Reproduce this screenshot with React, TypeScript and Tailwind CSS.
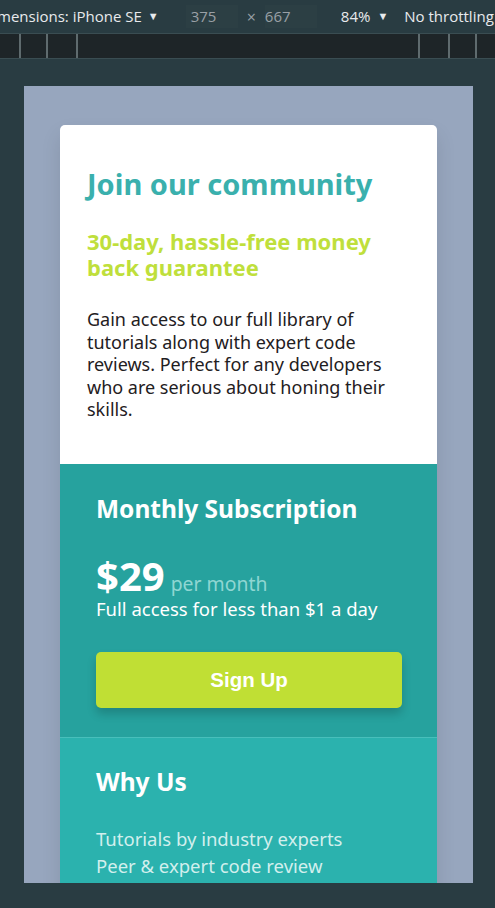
import React from "react";

export default function App() {
  const font = { fontFamily: '"Noto Sans", "Open Sans", sans-serif' };
  return (
    <div className="w-[495px] h-[908px] bg-[#293c42] overflow-hidden flex flex-col" style={font}>
      {/* toolbar */}
      <div className="h-[33px] flex items-center text-[15px] text-[#e8eaed] bg-[#293c42] whitespace-nowrap" style={{ fontFamily: '"Open Sans", sans-serif' }}>
        <span className="ml-[-3px]">mensions: iPhone SE</span>
        <span className="ml-[6px] text-[11px]">▼</span>
        <span className="ml-[27px] pl-[5px] text-[#9aa0a6] bg-[#2c3f44] w-[52px]">375</span>
        <span className="ml-[9px] text-[#9aa0a6] text-[16px]">×</span>
        <span className="ml-[9px] text-[#9aa0a6] w-[52px] bg-[#2c3f44]">667</span>
        <span className="ml-[24px]">84%</span>
        <span className="ml-[7px] text-[11px]">▼</span>
        <span className="ml-[16px]">No throttling</span>
      </div>
      {/* ruler */}
      <div className="h-[26px] bg-[#1e2528] border-y border-[#3a4d52] flex">
        <div className="ml-[19px] w-[2px] h-full bg-[#5f6b6e]" />
        <div className="ml-[25px] w-[2px] h-full bg-[#5f6b6e]" />
        <div className="ml-[28px] w-[2px] h-full bg-[#5f6b6e]" />
        <div className="ml-[340px] w-[2px] h-full bg-[#5f6b6e]" />
        <div className="ml-[28px] w-[2px] h-full bg-[#5f6b6e]" />
        <div className="ml-[25px] w-[2px] h-full bg-[#5f6b6e]" />
      </div>
      {/* viewport */}
      <div className="mt-[27px] ml-[24px] w-[449px] h-[797px] bg-[#97a6be] overflow-hidden pt-[39px] pl-[36px]">
        <div className="w-[377px] rounded-t-[5px] overflow-hidden shadow-[0_10px_20px_rgba(0,0,0,0.1)]">
          <div className="bg-white px-[27px] pt-[40px] h-[339px]">
            <h1 className="text-[29px] leading-[38px] font-bold text-[#3ab0ad]">Join our community</h1>
            <h2 className="mt-[25px] text-[22px] leading-[26px] font-bold text-[#bfdf3c]">30-day, hassle-free money back guarantee</h2>
            <p className="mt-[28px] text-[18px] leading-[22.6px] text-[#1f2022]">
              Gain access to our full library of tutorials along with expert code reviews. Perfect for any developers who are serious about honing their skills.
            </p>
          </div>
          <div className="bg-[#26a29e] px-[36px] pt-[28px] h-[273px] text-white">
            <h3 className="text-[24.5px] leading-[34px] font-bold">Monthly Subscription</h3>
            <div className="mt-[29px] flex items-baseline">
              <span className="text-[40px] leading-[42px] font-bold">$29</span>
              <span className="ml-[6px] text-[19.4px] text-[#8fd6d2]">per month</span>
            </div>
            <p className="text-[18.5px] leading-[22px]">Full access for less than $1 a day</p>
            <button className="mt-[32px] w-[306px] h-[56px] rounded-[5px] bg-[#c0df34] text-white text-[20.5px] font-bold shadow-[0_6px_10px_rgba(0,0,0,0.18)]" style={{ fontFamily: '"Liberation Sans", Arial, sans-serif' }}>
              Sign Up
            </button>
          </div>
          <div className="bg-[#2bb2ae] border-t border-[#48bfbb] px-[36px] pt-[27px] h-[200px] text-white">
            <h3 className="text-[24.5px] leading-[34px] font-bold">Why Us</h3>
            <div className="mt-[26px] text-[18.5px] leading-[27px] text-[#d2efed]">
              <p>Tutorials by industry experts</p>
              <p>Peer &amp; expert code review</p>
              <p>Coding exercises</p>
            </div>
          </div>
        </div>
      </div>
    </div>
  );
}
